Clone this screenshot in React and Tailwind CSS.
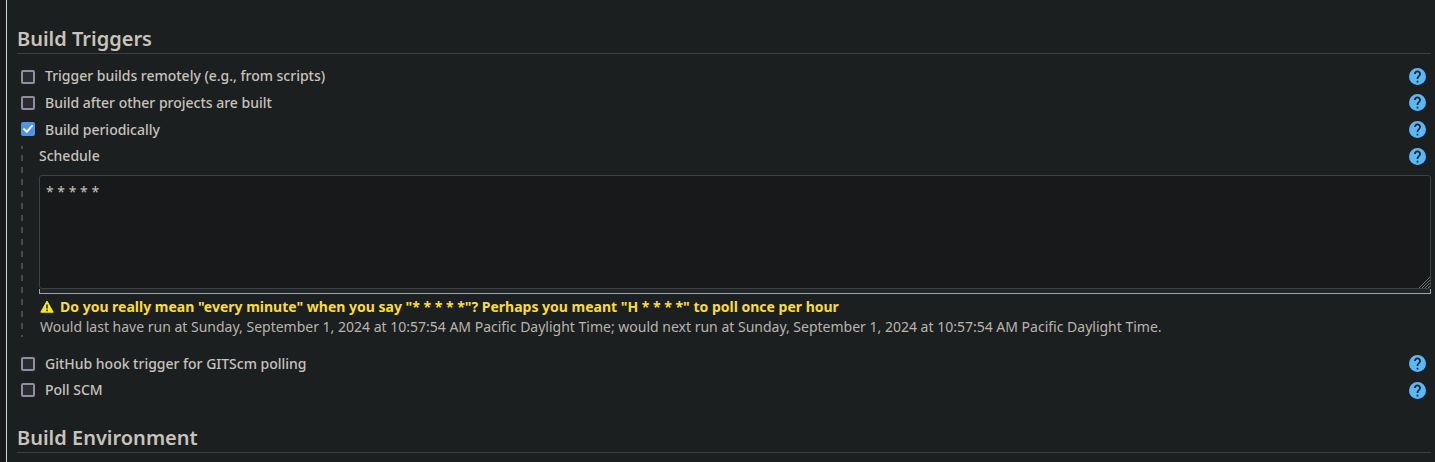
import React from "react";

function Help() {
  return (
    <svg viewBox="2 2 20 20" className="h-[17px] w-[17px] shrink-0" aria-label="Help">
      <circle cx="12" cy="12" r="10" fill="#5ab8f6" />
      <path
        fill="#1b1f20"
        d="M13 19h-2v-2h2v2zm2.07-7.75l-.9.92C13.45 12.9 13 13.5 13 15h-2v-.5c0-1.1.45-2.1 1.17-2.83l1.24-1.26c.37-.36.59-.86.59-1.41 0-1.1-.9-2-2-2s-2 .9-2 2H8c0-2.21 1.79-4 4-4s4 1.79 4 4c0 .88-.36 1.68-.93 2.25z"
      />
    </svg>
  );
}

function Box({ checked }) {
  if (!checked) {
    return <span className="h-[14px] w-[14px] shrink-0 rounded-[2px] border-2 border-[#8f8f9d] bg-[#2b2a33]" />;
  }
  return (
    <svg viewBox="0 0 14 14" className="h-[14px] w-[14px] shrink-0">
      <rect width="14" height="14" rx="2" fill="#4f94e6" />
      <path d="M3.1 7.1 L5.8 9.8 L11 3.9" fill="none" stroke="#fff" strokeWidth="2" strokeLinecap="round" strokeLinejoin="round" />
    </svg>
  );
}

function Option({ label, checked, className, boxClass, labelClass = "", helpClass = "pt-[2px]" }) {
  return (
    <div className={`flex items-start pl-1 pr-[5px] ${className}`}>
      <span className={`flex ${boxClass}`}>
        <Box checked={checked} />
      </span>
      <span className={`ml-[10px] grow text-[14px] leading-5 font-medium tracking-[-0.01px] ${labelClass}`}>{label}</span>
      <span className={`flex ${helpClass}`}>
        <Help />
      </span>
    </div>
  );
}

function Heading({ children }) {
  return (
    <h2 className="h-[30px] border-b border-[#3c4041] text-[20px] leading-[29px] font-semibold">{children}</h2>
  );
}

export default function App() {
  return (
    <div className="flex h-[462px] w-[1435px] overflow-hidden bg-[#18191b] font-['Noto_Sans',sans-serif] text-[#c8c3bc]">
      <main className="ml-[6px] grow border-l border-[#d8d4cf] bg-[#1b1f20] pt-6 pr-1 pl-[10px]">
        <Heading>Build Triggers</Heading>
        <div className="pt-3">
          <Option label="Trigger builds remotely (e.g., from scripts)" className="h-[27px]" boxClass="pt-1" />
          <Option label="Build after other projects are built" className="h-[26px]" boxClass="pt-[3px]" helpClass="pt-px" />
          <Option label="Build periodically" checked className="h-[27px]" boxClass="pt-[3px]" labelClass="pt-px" />
        </div>
        <div className="flex h-[191px]">
          <div className="ml-1 w-[2px] shrink-0 bg-[repeating-linear-gradient(to_bottom,#4b4943_0px,#4b4943_3px,transparent_3px,transparent_9px,#4b4943_9px,#4b4943_12px)]" />
          <div className="ml-4 grow">
            <div className="flex h-[29px] pr-[5px]">
              <span className="grow text-[14px] leading-5 font-medium">Schedule</span>
              <span className="pt-[2px]">
                <Help />
              </span>
            </div>
            <div className="relative h-[114px]">
              <textarea
                defaultValue="* * * * *"
                spellCheck={false}
                className="block h-[114px] w-full resize-none rounded-[3px] border border-[#3e4244] bg-[#18191b] px-[6px] py-[6px] text-[14px] leading-5 outline-none"
              />
              <svg viewBox="0 0 11 11" className="pointer-events-none absolute right-px bottom-px h-[11px] w-[11px]">
                <path d="M0 11 L11 0 M3 11 L11 3 M6 11 L11 6 M9 11 L11 9" fill="none" stroke="#707274" strokeWidth="1" />
              </svg>
            </div>
            <div className="h-[5px] border border-t-0 border-[#9aa5ab] bg-[#222527]" />
            <div className="flex h-[23px] items-center pt-[2px] text-[14px] leading-5 font-bold text-[#fbdc38]">
              <svg viewBox="0 0 14 13" className="ml-px mr-[6px] h-[13px] w-[14px] shrink-0">
                <path d="M7 1 L13.2 12.2 H.8 Z" fill="#fce620" stroke="#fce620" strokeWidth="1" strokeLinejoin="round" />
                <path d="M6 4.5h2v4H6z M6 9.5h2v1.8H6z" fill="#55501b" />
              </svg>
              <span>Do you really mean "every minute" when you say "* * * * *"? Perhaps you meant "H * * * *" to poll once per hour</span>
            </div>
            <div className="ml-px text-[14px] leading-5 whitespace-nowrap text-[#bab5ad]">
              Would last have run at Sunday, September 1, 2024 at 10:57:54 AM Pacific Daylight Time; would next run at Sunday, September 1, 2024 at 10:57:54 AM Pacific Daylight Time.
            </div>
          </div>
        </div>
        <div className="pt-4">
          <Option label="GitHub hook trigger for GITScm polling" className="h-[27px]" boxClass="pt-1" labelClass="pt-px" />
          <Option label="Poll SCM" className="h-[43px]" boxClass="pt-[3px]" />
        </div>
        <Heading>Build Environment</Heading>
      </main>
    </div>
  );
}
